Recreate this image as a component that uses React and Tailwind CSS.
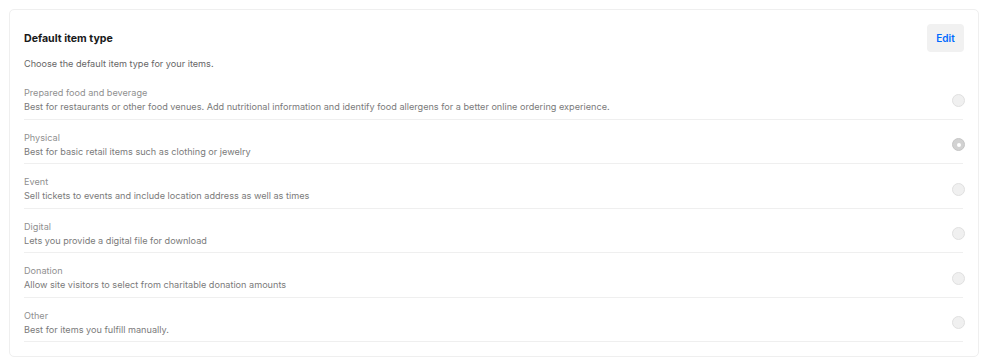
import React from "react";

const items = [
  { t: "Prepared food and beverage", d: "Best for restaurants or other food venues. Add nutritional information and identify food allergens for a better online ordering experience." },
  { t: "Physical", d: "Best for basic retail items such as clothing or jewelry", sel: true },
  { t: "Event", d: "Sell tickets to events and include location address as well as times" },
  { t: "Digital", d: "Lets you provide a digital file for download" },
  { t: "Donation", d: "Allow site visitors to select from charitable donation amounts" },
  { t: "Other", d: "Best for items you fulfill manually." },
];

export default function App() {
  return (
    <div className="w-[998px] h-[362px] bg-white pt-[9px] pl-[9px]" style={{ fontFamily: "Inter, 'Noto Sans', sans-serif" }}>
      <div className="w-[970px] h-[348px] border border-[#efefef] rounded-[5px] px-[14px] pt-[14px]">
        <div className="flex items-center justify-between">
          <div className="pt-[2px] text-[10.6px] font-bold text-[#1a1a1a]">Default item type</div>
          <div className="w-[37px] h-[28px] rounded-[4px] bg-[#f1f1f1] flex items-center justify-center text-[10px] font-semibold text-[#006aff]">Edit</div>
        </div>
        <div className="mt-[5px] text-[9.15px] leading-[14px] text-[#666]">Choose the default item type for your items.</div>
        <div className="mt-[4px] mr-[1px]">
          {items.map((it) => (
            <div key={it.t} className="flex items-center justify-between border-b border-[#efefef] pt-[11px] pb-[4.5px]">
              <div className="text-[9.15px] leading-[14px]">
                <div className="text-[#8f8f8f]">{it.t}</div>
                <div className="text-[#7a7a7a]">{it.d}</div>
              </div>
              {it.sel ? (
                <div className="-mr-[2px] w-[13px] h-[13px] rounded-full bg-[#d2d2d2] border border-[#c6c6c6] flex items-center justify-center">
                  <div className="w-[4px] h-[4px] rounded-full bg-white" />
                </div>
              ) : (
                <div className="-mr-[2px] w-[13px] h-[13px] rounded-full bg-[#f0f0f0] border border-[#e0e0e0]" />
              )}
            </div>
          ))}
        </div>
      </div>
    </div>
  );
}
